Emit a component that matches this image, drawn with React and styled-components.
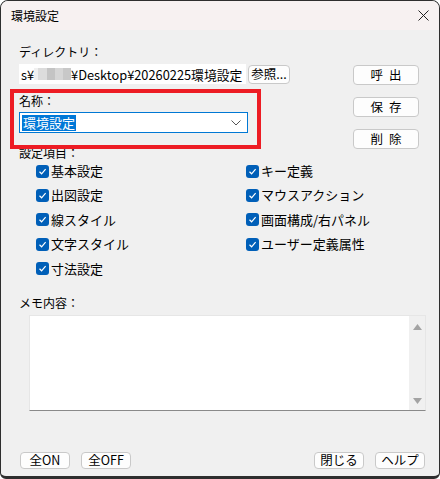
import React from 'react'
import styled, { createGlobalStyle } from 'styled-components'

const GlobalStyle = createGlobalStyle`
    html, body {
        margin: 0;
        padding: 0;
        background: #ffffff;
    }
    body {
        font-family: 'Noto Sans CJK JP', 'Liberation Sans', sans-serif;
        font-size: 12px;
        color: #000;
    }
`

const Window = styled.div`
    position: relative;
    box-sizing: border-box;
    width: 440px;
    height: 479px;
    display: flex;
    flex-direction: column;
    background: #f0f0f0;
    border: 1px solid #2e2e2e;
    border-bottom-width: 3px;
    border-radius: 8px 8px 6px 6px;
    overflow: hidden;
`

const TitleBar = styled.div`
    height: 29px;
    flex: none;
    display: flex;
    align-items: center;
    justify-content: space-between;
    padding: 0 10px 0 10px;
    background: #f7f1f1;
    font-size: 12px;
    line-height: 1;
`

const Body = styled.div`
    flex: 1;
    display: flex;
    flex-direction: column;
    padding: 0 14px 7px 18px;
`

const TopRow = styled.div`
    display: grid;
    grid-template-columns: 1fr 66px;
    align-items: start;
    column-gap: 6px;
    margin-right: 6px;
`

const LeftStack = styled.div`
    display: flex;
    flex-direction: column;
`

const Label = styled.div`
    height: 16px;
    line-height: 16px;
    font-size: 12px;
    margin-top: ${p => p.$top || 0}px;
`

const FieldRow = styled.div`
    display: flex;
    align-items: center;
    gap: 2px;
    margin-top: 4px;
`

const PathField = styled.div`
    box-sizing: border-box;
    width: 227px;
    height: 20px;
    background: #fff;
    display: flex;
    align-items: center;
    padding-left: 2px;
    font-size: 12.8px;
    white-space: nowrap;
    overflow: hidden;
`

const Mosaic = styled.span`
    display: inline-block;
    width: ${p => p.$w}px;
    height: 12px;
    background: ${p => p.$c};
`

const Button = styled.button`
    box-sizing: border-box;
    width: ${p => p.$w}px;
    height: ${p => p.$h || 20}px;
    padding: 0;
    background: #fdfdfd;
    border: 1px solid #c9c9c9;
    border-radius: 4px;
    font-family: inherit;
    font-size: 12.5px;
    line-height: 1;
    color: #000;
    letter-spacing: ${p => p.$spacing || 0}px;
    text-indent: ${p => p.$spacing || 0}px;
`

const Combo = styled.div`
    box-sizing: border-box;
    width: 229px;
    height: 21px;
    margin-top: 3px;
    background: #fff;
    border: 1px solid #0078d4;
    display: flex;
    align-items: center;
    justify-content: space-between;
    padding: 0 6px 0 2px;
`

const Selected = styled.span`
    background: #0078d7;
    color: #fff;
    font-size: 13px;
    line-height: 16px;
    padding: 0 1px;
`

const ButtonStack = styled.div`
    display: flex;
    flex-direction: column;
    gap: 12px;
    margin-top: 35px;
`

const CheckGrid = styled.div`
    display: grid;
    grid-template-columns: 210px 170px;
    grid-auto-rows: 16px;
    row-gap: 8.4px;
    margin: 2px 0 0 17px;
`

const CheckItem = styled.label`
    display: flex;
    align-items: center;
    gap: 2px;
    font-size: 13px;
    line-height: 16px;
    grid-column: ${p => p.$col};
    grid-row: ${p => p.$row};
`

const Box = styled.span`
    width: 13px;
    height: 13px;
    border-radius: 3px;
    background: #005fb8;
    display: flex;
    align-items: center;
    justify-content: center;
`

const MemoBox = styled.div`
    box-sizing: border-box;
    width: 397px;
    height: 96px;
    margin: 4px 0 0 10px;
    background: #fff;
    border: 1px solid #e6e6e6;
    border-bottom: 1px solid #8a8a8a;
    display: flex;
    justify-content: flex-end;
`

const ScrollTrack = styled.div`
    width: 16px;
    background: #f0f0f0;
    display: flex;
    flex-direction: column;
    justify-content: space-between;
    align-items: center;
    padding: 8px 0 6px;
`

const Footer = styled.div`
    margin-top: auto;
    display: flex;
    justify-content: space-between;
    padding-left: 1px;
`

const ButtonGroup = styled.div`
    display: flex;
    gap: 11px;
`

const Highlight = styled.div`
    position: absolute;
    left: 9px;
    top: 88px;
    width: 251px;
    height: 60px;
    box-sizing: border-box;
    border: 4px solid #ed1c24;
    pointer-events: none;
`

const Check = () => (
    <Box>
        <svg width="9" height="9" viewBox="0 0 9 9">
            <path d="M1.5 4.8 L3.6 6.8 L7.6 2.2" fill="none" stroke="#fff" strokeWidth="1.2" />
        </svg>
    </Box>
)

const Arrow = ({ up }) => (
    <svg width="9" height="6" viewBox="0 0 9 6">
        <path d={up ? 'M0 6 L4.5 0 L9 6 Z' : 'M0 0 L9 0 L4.5 6 Z'} fill="#a3a3a3" />
    </svg>
)

const items = [
    ['基本設定', 1, 1], ['出図設定', 1, 2], ['線スタイル', 1, 3], ['文字スタイル', 1, 4], ['寸法設定', 1, 5],
    ['キー定義', 2, 1], ['マウスアクション', 2, 2], ['画面構成/右パネル', 2, 3], ['ユーザー定義属性', 2, 4],
]

export default function App() {
    return (
        <>
            <GlobalStyle />
            <Window>
                <TitleBar>
                    <span>環境設定</span>
                    <svg width="11" height="11" viewBox="0 0 11 11">
                        <path d="M0.5 0.5 L10.5 10.5 M10.5 0.5 L0.5 10.5" stroke="#222" strokeWidth="1" />
                    </svg>
                </TitleBar>
                <Body>
                    <TopRow>
                        <LeftStack>
                            <Label $top={14}>ディレクトリ：</Label>
                            <FieldRow>
                                <PathField>
                                    s¥
                                    <Mosaic $w={4} $c="#f0f0f0" />
                                    <Mosaic $w={9} $c="#dcdcdc" />
                                    <Mosaic $w={8} $c="#c4c4c4" />
                                    <Mosaic $w={8} $c="#d6d6d6" />
                                    <Mosaic $w={8} $c="#c8c8c8" />
                                    ¥Desktop¥20260225環境設定
                                </PathField>
                                <Button $w={42} $h={19}>参照...</Button>
                            </FieldRow>
                            <Label $top={9}>名称：</Label>
                            <Combo>
                                <Selected>環境設定</Selected>
                                <svg width="10" height="6" viewBox="0 0 10 6">
                                    <path d="M0.5 0.5 L5 5 L9.5 0.5" fill="none" stroke="#555" strokeWidth="1" />
                                </svg>
                            </Combo>
                            <Label $top={12}>設定項目：</Label>
                        </LeftStack>
                        <ButtonStack>
                            <Button $w={66} $spacing={6}>呼出</Button>
                            <Button $w={66} $spacing={6}>保存</Button>
                            <Button $w={66} $spacing={6}>削除</Button>
                        </ButtonStack>
                    </TopRow>
                    <CheckGrid>
                        {items.map(([text, col, row]) => (
                            <CheckItem key={text} $col={col} $row={row}>
                                <Check />
                                {text}
                            </CheckItem>
                        ))}
                    </CheckGrid>
                    <Label $top={18}>メモ内容：</Label>
                    <MemoBox>
                        <ScrollTrack>
                            <Arrow up />
                            <Arrow />
                        </ScrollTrack>
                    </MemoBox>
                    <Footer>
                        <ButtonGroup>
                            <Button $w={50} $h={17}>全ON</Button>
                            <Button $w={50} $h={17}>全OFF</Button>
                        </ButtonGroup>
                        <ButtonGroup>
                            <Button $w={50} $h={17}>閉じる</Button>
                            <Button $w={50} $h={17}>ヘルプ</Button>
                        </ButtonGroup>
                    </Footer>
                </Body>
                <Highlight />
            </Window>
        </>
    )
}
